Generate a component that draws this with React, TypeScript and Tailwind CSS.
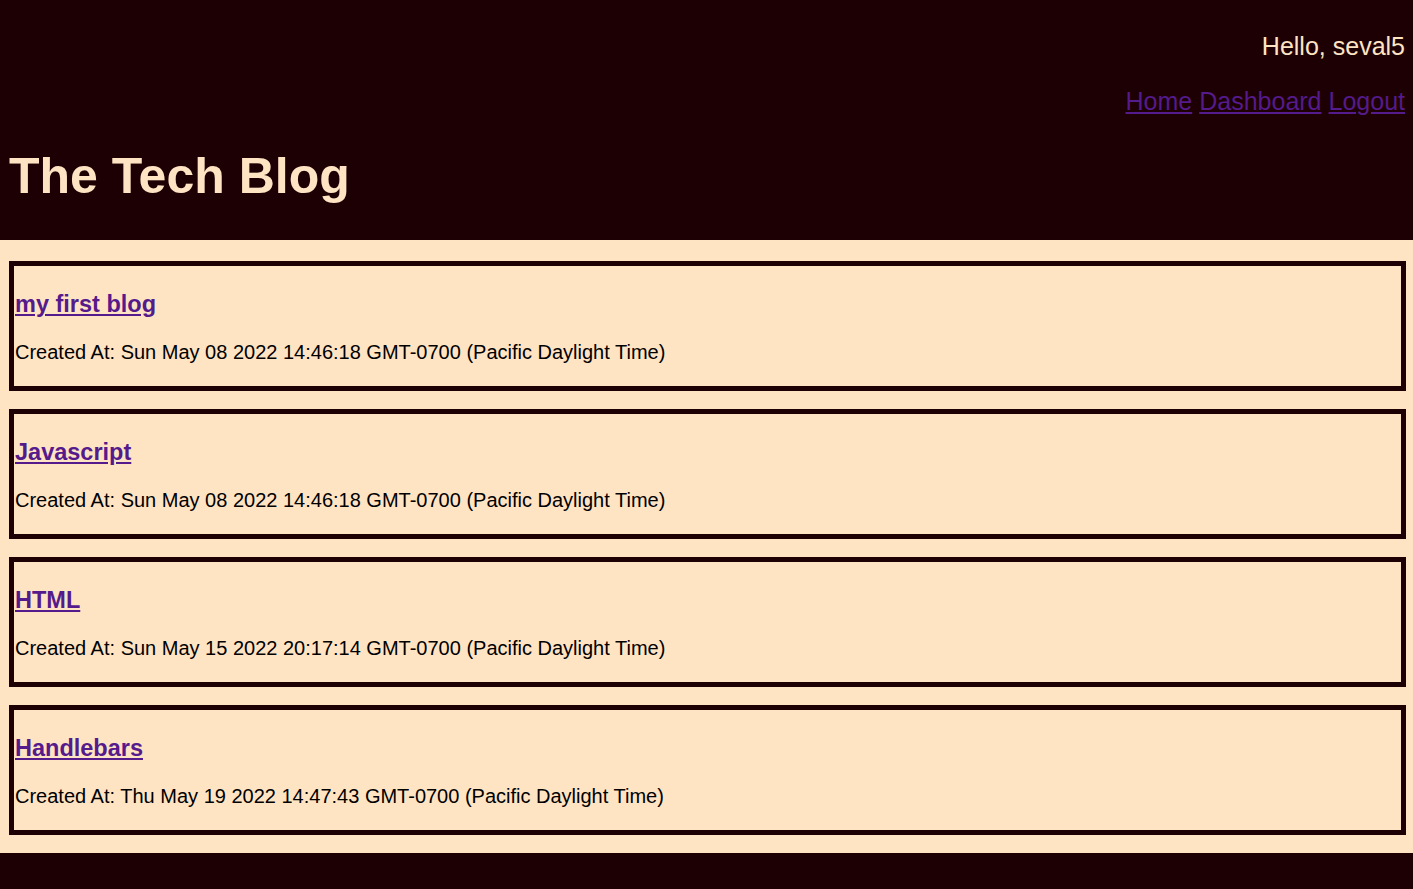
import React from "react";

const posts = [
  { title: "my first blog", created: "Sun May 08 2022 14:46:18 GMT-0700 (Pacific Daylight Time)" },
  { title: "Javascript", created: "Sun May 08 2022 14:46:18 GMT-0700 (Pacific Daylight Time)" },
  { title: "HTML", created: "Sun May 15 2022 20:17:14 GMT-0700 (Pacific Daylight Time)" },
  { title: "Handlebars", created: "Thu May 19 2022 14:47:43 GMT-0700 (Pacific Daylight Time)" },
];

export default function App() {
  return (
    <div className="min-h-screen bg-[#1c0003] font-['Liberation_Sans',Arial,sans-serif]">
      {/* Header */}
      <header className="h-[240px] pt-[32px]">
        <div className="flex flex-col items-end pr-[8px]">
          <p className="text-[25px] leading-[29px] text-[#ffe4c4]">Hello, seval5</p>
          <nav className="mt-[26px] flex gap-[7px] text-[25px] leading-[29px] text-[#551a8b]">
            <a href="#" className="underline">Home</a>
            <a href="#" className="underline">Dashboard</a>
            <a href="#" className="underline">Logout</a>
          </nav>
        </div>
        <h1 className="mt-[32px] pl-[9px] text-[50px] leading-[57px] font-bold text-[#ffe4c4]">The Tech Blog</h1>
      </header>

      {/* Posts */}
      <main className="bg-[#ffe4c4] pt-[21px] pb-[18px] flex flex-col gap-[18px]">
        {posts.map((post, i) => (
          <article key={i} className="ml-[9px] mr-[7px] border-[5px] border-[#1c0003] pl-[1px] pt-[25px] pb-[22px]">
            <h3 className="text-[23.5px] leading-[27px] font-bold">
              <a href="#" className="underline text-[#551a8b]">{post.title}</a>
            </h3>
            <p className="mt-[22px] text-[20px] leading-[24px] text-black">Created At: {post.created}</p>
          </article>
        ))}
      </main>
    </div>
  );
}
